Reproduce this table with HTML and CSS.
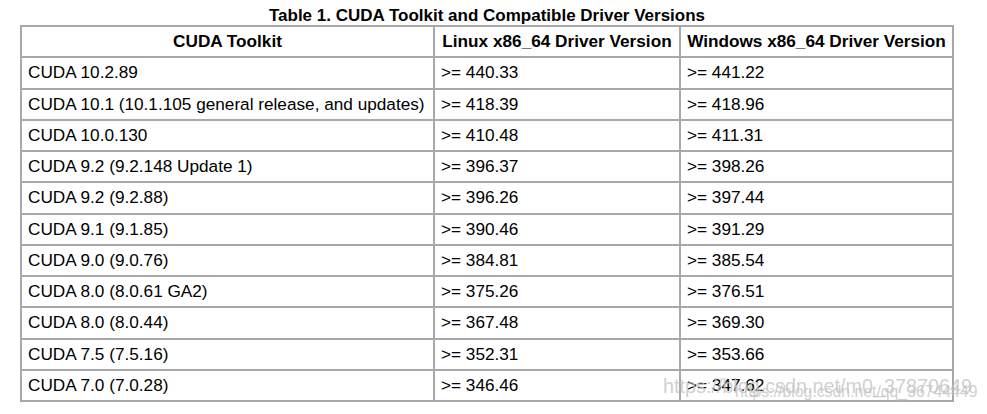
FILE: index.html
```html
<!DOCTYPE html>
<html lang="en">
<head>
<meta charset="utf-8">
<title>CUDA Toolkit and Compatible Driver Versions</title>
<link rel="stylesheet" href="styles.css">
</head>
<body>
<div class="page">
  <table class="compat">
    <caption class="compat-caption">Table 1. CUDA Toolkit and Compatible Driver Versions</caption>
    <thead>
      <tr>
        <th class="c1">CUDA Toolkit</th>
        <th class="c2">Linux x86_64 Driver Version</th>
        <th class="c3">Windows x86_64 Driver Version</th>
      </tr>
    </thead>
    <tbody>
      <tr><td>CUDA 10.2.89</td><td>&gt;= 440.33</td><td>&gt;= 441.22</td></tr>
      <tr><td>CUDA 10.1 (10.1.105 general release, and updates)</td><td>&gt;= 418.39</td><td>&gt;= 418.96</td></tr>
      <tr><td>CUDA 10.0.130</td><td>&gt;= 410.48</td><td>&gt;= 411.31</td></tr>
      <tr><td>CUDA 9.2 (9.2.148 Update 1)</td><td>&gt;= 396.37</td><td>&gt;= 398.26</td></tr>
      <tr><td>CUDA 9.2 (9.2.88)</td><td>&gt;= 396.26</td><td>&gt;= 397.44</td></tr>
      <tr><td>CUDA 9.1 (9.1.85)</td><td>&gt;= 390.46</td><td>&gt;= 391.29</td></tr>
      <tr><td>CUDA 9.0 (9.0.76)</td><td>&gt;= 384.81</td><td>&gt;= 385.54</td></tr>
      <tr><td>CUDA 8.0 (8.0.61 GA2)</td><td>&gt;= 375.26</td><td>&gt;= 376.51</td></tr>
      <tr><td>CUDA 8.0 (8.0.44)</td><td>&gt;= 367.48</td><td>&gt;= 369.30</td></tr>
      <tr><td>CUDA 7.5 (7.5.16)</td><td>&gt;= 352.31</td><td>&gt;= 353.66</td></tr>
      <tr><td>CUDA 7.0 (7.0.28)</td><td>&gt;= 346.46</td><td>&gt;= 347.62</td></tr>
    </tbody>
  </table>
  <div class="watermark wm1">https://blog.csdn.net/m0_37870649</div>
  <div class="watermark wm2">https://blog.csdn.net/qq_36744449</div>
</div>
</body>
</html>
```

FILE: styles.css
```css
html, body {
  margin: 0;
  padding: 0;
  background: #ffffff;
}

.page {
  position: relative;
  width: 987px;
  height: 414px;
  overflow: hidden;
  padding-left: 20px;
  box-sizing: border-box;
  font-family: "Liberation Sans", Arial, sans-serif;
  color: #000000;
}

.compat {
  border-collapse: collapse;
  font-size: 17.2px;
}

.compat-caption {
  font-size: 17px;
  font-weight: bold;
  line-height: 19px;
  padding-top: 6px;
  text-align: center;
  color: #000000;
}

.compat th,
.compat td {
  border: 2px solid #a8a8a8;
  padding: 0 6px;
  line-height: 19px;
  white-space: nowrap;
  text-align: left;
  vertical-align: middle;
}

.compat tr {
  height: 31.25px;
}

.compat th {
  font-weight: bold;
  text-align: center;
}

.c1 { width: 399px; }
.c2 { width: 232px; }
.c3 { width: 259px; }

.watermark {
  position: absolute;
  font-family: "Liberation Sans", Arial, sans-serif;
  color: rgba(195, 195, 195, 0.8);
  white-space: nowrap;
  pointer-events: none;
}

.wm1 {
  left: 663px;
  top: 375px;
  font-size: 19.8px;
}

.wm2 {
  left: 735px;
  top: 383px;
  font-size: 15.8px;
}
```
